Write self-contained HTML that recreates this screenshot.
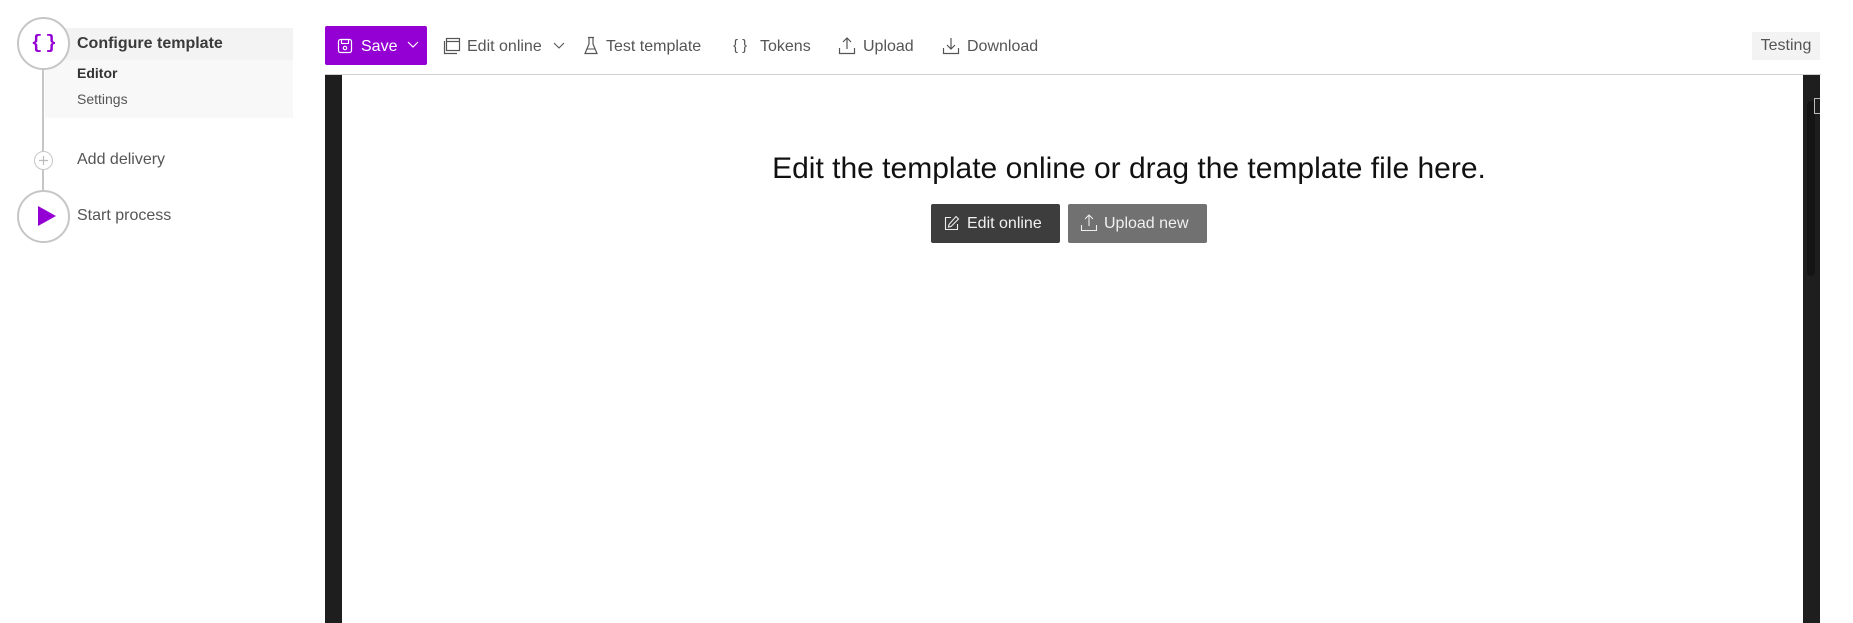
<!DOCTYPE html>
<html><head><meta charset="utf-8"><style>
*{margin:0;padding:0;box-sizing:border-box}
body{width:1853px;height:623px;overflow:hidden;background:#fff;font-family:"Liberation Sans",sans-serif;color:#444;position:relative}
.a{position:absolute;white-space:nowrap}
.circ{position:absolute;border:2px solid #c6c6c6;border-radius:50%;background:#fff}
.tb{position:absolute;top:37px;font-size:16px;color:#555;line-height:20px}
svg{position:absolute}
</style></head><body>
<!-- left panel -->
<div class="a" style="left:45px;top:28px;width:248px;height:32px;background:#f3f3f3"></div>
<div class="a" style="left:45px;top:60px;width:248px;height:58px;background:#f8f8f8"></div>
<div class="a" style="left:42px;top:60px;width:2px;height:140px;background:#c6c6c6"></div>
<div class="circ" style="left:17px;top:17px;width:53px;height:53px"></div>
<div class="a" style="left:31px;top:31px;font-size:19px;line-height:24px;font-weight:bold;color:#9400d3;letter-spacing:3px;font-family:'Liberation Mono',monospace">{}</div>
<div class="a" style="left:77px;top:35px;font-size:16px;font-weight:bold;color:#3a3a3a">Configure template</div>
<div class="a" style="left:77px;top:65px;font-size:14px;font-weight:bold;color:#333">Editor</div>
<div class="a" style="left:77px;top:91px;font-size:14px;color:#555">Settings</div>
<div class="circ" style="left:34px;top:151px;width:19px;height:19px;border-width:1.5px"></div>
<svg style="left:34px;top:151px" width="19" height="19"><path d="M9.5 5 V14 M5 9.5 H14" stroke="#bbb" stroke-width="1.2"/></svg>
<div class="a" style="left:77px;top:151px;font-size:16px;color:#555">Add delivery</div>
<div class="circ" style="left:17px;top:190px;width:53px;height:53px"></div>
<svg style="left:36px;top:205px" width="22" height="22"><path d="M2 1 L20 11 L2 21 Z" fill="#9400d3"/></svg>
<div class="a" style="left:77px;top:207px;font-size:16px;color:#555">Start process</div>
<!-- toolbar -->
<div class="a" style="left:325px;top:26px;width:102px;height:39px;background:#9400d3;border-radius:2px"></div>
<svg style="left:337px;top:38px" width="16" height="16"><rect x="1.5" y="1.5" width="13" height="13" rx="2" fill="none" stroke="#fff" stroke-width="1.2"/><rect x="4.5" y="1.5" width="7" height="4" fill="none" stroke="#fff" stroke-width="1.1"/><circle cx="8" cy="10" r="1.7" fill="none" stroke="#fff" stroke-width="1.1"/></svg>
<div class="tb" style="left:361px;color:#fff">Save</div>
<svg style="left:407px;top:40px" width="12" height="10"><path d="M1 2 L6 7 L11 2" fill="none" stroke="#fff" stroke-width="1.2"/></svg>
<svg style="left:443px;top:37px" width="18" height="18"><rect x="3.5" y="1.5" width="13" height="12" fill="none" stroke="#555" stroke-width="1.2"/><line x1="3.5" y1="4.5" x2="16.5" y2="4.5" stroke="#555" stroke-width="1.2"/><path d="M1.5 4 V16.5 H14" fill="none" stroke="#555" stroke-width="1.2"/></svg>
<div class="tb" style="left:467px">Edit online</div>
<svg style="left:553px;top:41px" width="12" height="10"><path d="M1 2 L6 7 L11 2" fill="none" stroke="#555" stroke-width="1.1"/></svg>
<svg style="left:583px;top:36px" width="16" height="20"><path d="M5 1.5 H11 M6 1.5 V8 L2 17.5 H14 L10 8 V1.5" fill="none" stroke="#555" stroke-width="1.2"/><line x1="3.5" y1="13" x2="12.5" y2="13" stroke="#555" stroke-width="1"/></svg>
<div class="tb" style="left:606px">Test template</div>
<div class="tb" style="left:733px;top:36px;font-size:15px">{ }</div>
<div class="tb" style="left:760px">Tokens</div>
<svg style="left:838px;top:36px" width="18" height="20"><path d="M9 13 V2 M5 6 L9 2 L13 6 M1.5 12 V17.5 H16.5 V12" fill="none" stroke="#555" stroke-width="1.2"/></svg>
<div class="tb" style="left:863px">Upload</div>
<svg style="left:942px;top:36px" width="18" height="20"><path d="M9 2 V13 M5 9 L9 13 L13 9 M1.5 12 V17.5 H16.5 V12" fill="none" stroke="#555" stroke-width="1.2"/></svg>
<div class="tb" style="left:967px">Download</div>
<div class="a" style="left:1752px;top:32px;width:68px;height:28px;background:#f3f3f3;font-size:16px;color:#555;line-height:28px;text-align:center">Testing</div>
<!-- content -->
<div class="a" style="left:325px;top:74px;width:1496px;height:1px;background:#d0d0d0"></div>
<div class="a" style="left:325px;top:75px;width:17px;height:548px;background:#1e1e1e"></div>
<div class="a" style="left:1803px;top:75px;width:17px;height:548px;background:#1e1e1e"></div>
<div class="a" style="left:1807px;top:101px;width:8px;height:175px;background:#141414;border-radius:4px"></div>
<div class="a" style="left:1814px;top:98px;width:6px;height:16px;border:1.5px solid #bbb;border-right:none"></div>
<div class="a" style="left:769px;top:150px;width:720px;text-align:center;font-size:30px;color:#111;line-height:38px">Edit the template online or drag the template file here.</div>
<div class="a" style="left:931px;top:204px;width:129px;height:39px;background:#3d3d3d;border-radius:2px"></div>
<svg style="left:943px;top:215px" width="17" height="17"><path d="M8 2.5 H2.5 V14.5 H14.5 V9" fill="none" stroke="#eee" stroke-width="1.1"/><path d="M13 1.5 L15.5 4 L8 11.5 L5.5 12 L6 9.5 Z" fill="none" stroke="#eee" stroke-width="1.1"/></svg>
<div class="a" style="left:967px;top:215px;font-size:16px;color:#f0f0f0">Edit online</div>
<div class="a" style="left:1068px;top:204px;width:139px;height:39px;background:#717171;border-radius:2px"></div>
<svg style="left:1080px;top:213px" width="18" height="20"><path d="M9 13 V2 M5 6 L9 2 L13 6 M1.5 12 V17.5 H16.5 V12" fill="none" stroke="#eee" stroke-width="1.1"/></svg>
<div class="a" style="left:1104px;top:215px;font-size:16px;color:#f0f0f0">Upload new</div>
</body></html>
